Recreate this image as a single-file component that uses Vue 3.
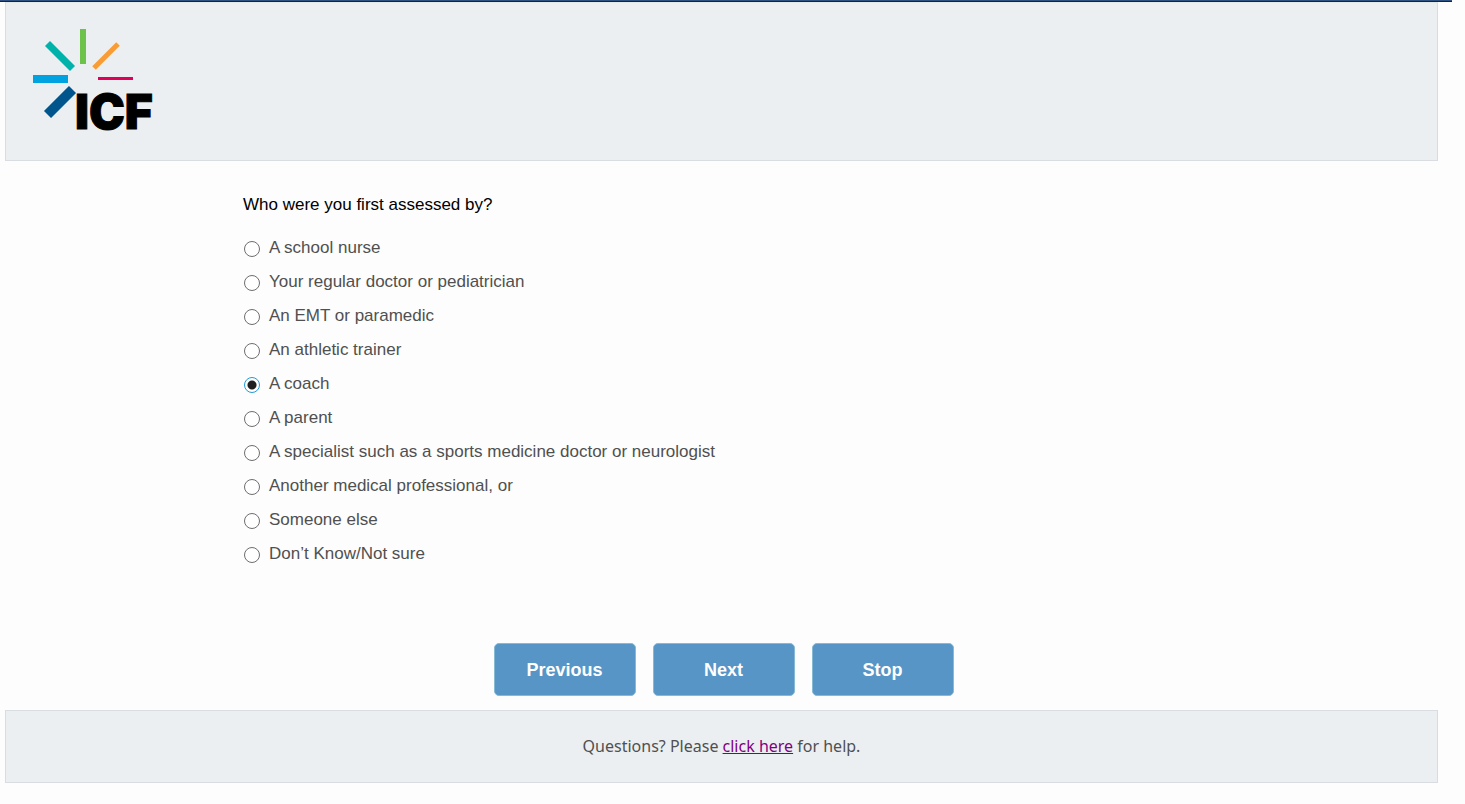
<script setup>
import { ref } from 'vue'

const options = [
  'A school nurse',
  'Your regular doctor or pediatrician',
  'An EMT or paramedic',
  'An athletic trainer',
  'A coach',
  'A parent',
  'A specialist such as a sports medicine doctor or neurologist',
  'Another medical professional, or',
  'Someone else',
  'Don’t Know/Not sure'
]
const selected = ref('A coach')
</script>

<template>
  <div class="page">
    <div class="topline"></div>
    <header class="panel header">
      <svg class="logo" width="136" height="106" viewBox="30 26 136 106" role="img" aria-label="ICF">
        <path d="M83 29V64" stroke="#6cc24a" stroke-width="6" />
        <path d="M94 68L118 44" stroke="#f89c33" stroke-width="5" />
        <path d="M98 78.500H133" stroke="#e0005a" stroke-width="3" />
        <path d="M47.500 43.500L72.500 68.500" stroke="#00b2a9" stroke-width="7" />
        <path d="M33 79H68" stroke="#00a3e0" stroke-width="8" />
        <path d="M47.500 114.500L72.500 89.500" stroke="#00558c" stroke-width="10" />
        <text class="wordmark" x="75" y="129">ICF</text>
      </svg>
    </header>

    <main>
      <form @submit.prevent>
        <fieldset>
          <legend>Who were you first assessed by?</legend>
          <label v-for="(option, i) in options" :key="option" class="option" :for="'option-' + i">
            <input :id="'option-' + i" v-model="selected" type="radio" name="assessor" :value="option" />
            <span>{{ option }}</span>
          </label>
        </fieldset>
        <div class="actions">
          <button type="button">Previous</button>
          <button type="submit">Next</button>
          <button type="button">Stop</button>
        </div>
      </form>
    </main>

    <footer class="panel footer">
      <p>Questions? Please <a href="#help">click here</a> for help.</p>
    </footer>
  </div>
</template>

<style>
body {
  background: #fdfdfd;
}
</style>

<style scoped>
.page {
  font-family: "Liberation Sans", Arial, sans-serif;
  font-size: 17px;
  line-height: 20px;
  color: #505050;
}
.topline {
  height: 2px;
  margin-right: 13px;
  box-sizing: border-box;
  background: #2f5283;
  border-bottom: 1px solid #1b2233;
}
.panel {
  margin: 0 27px 0 5px;
  background: #ebeff2;
  border: 1px solid #d9dde1;
}
.header {
  padding: 23px 24px 28px;
  border-top-color: #e3e8e8;
}
.logo {
  display: block;
  overflow: visible;
}
.wordmark {
  font: 900 48px Inter, sans-serif;
  fill: #000;
  stroke: #000;
  stroke-width: 1px;
}
fieldset {
  border: 0;
  margin: 0;
  padding: 34px 0 0 243px;
  min-width: 0;
}
legend {
  float: left;
  width: 100%;
  padding: 0;
  margin-bottom: 16px;
  color: #000;
}
.option {
  clear: both;
  display: flex;
  align-items: center;
  gap: 9px;
  width: fit-content;
  height: 34px;
}
.option input {
  appearance: none;
  box-sizing: border-box;
  width: 16px;
  height: 16px;
  margin: 2px 0 0 1px;
  border: 1px solid #6e6e6e;
  border-radius: 50%;
  background: #fff;
}
.option input:checked {
  border-color: #1f9bd8;
  background: radial-gradient(circle, #1f1f1f 4px, #fff 5px);
}
.actions {
  display: flex;
  justify-content: center;
  gap: 17px;
  padding: 72px 18px 14px 0;
}
button {
  width: 142px;
  height: 53px;
  padding: 0;
  border: 1px solid #86b9d3;
  border-radius: 5px;
  background: #5695c5;
  color: #fff;
  font: bold 18px/20px "Liberation Sans", Arial, sans-serif;
}
.footer {
  padding: 25px 0;
  text-align: center;
}
.footer p {
  margin: 0;
  font-family: "Noto Sans", Tahoma, sans-serif;
  font-size: 16px;
  line-height: 21px;
}
.footer a {
  color: #800080;
}
</style>
